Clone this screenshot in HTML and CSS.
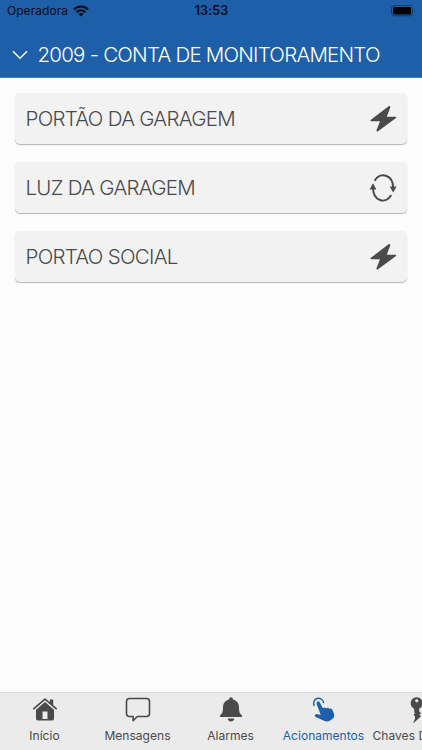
FILE: index.html
```html
<!DOCTYPE html>
<html lang="pt-BR">
  <head>
    <meta charset="UTF-8" />
    <meta name="viewport" content="width=device-width, initial-scale=1.0" />
    <title>Acionamentos</title>
    <link rel="stylesheet" href="styles.css">
  </head>
  <body>
    <header class="header">
      <div class="status">
        <div class="carrier">
          <span class="carrier-name">Operadora</span>
          <svg class="wifi" viewBox="0 0 16 12">
            <g fill="none" stroke="#050c18" stroke-width="2.1">
              <path d="M1 4.4C5 .5 11 .5 15 4.4" />
              <path d="M3.5 7.2C6.1 4.8 9.9 4.8 12.5 7.2" />
            </g>
            <path fill="#050c18" d="M5.4 9Q8 6.9 10.6 9L8 11.6z" />
          </svg>
        </div>
        <div class="clock">13:53</div>
        <svg class="battery" viewBox="0 0 25 12">
          <rect x=".5" y=".6" width="21" height="10.2" rx="2.8" fill="none" stroke="#103868" />
          <rect x="2" y="2" width="18" height="7.4" rx="1.6" fill="#000" />
          <path d="M23 3.9q1.4 1.8 0 3.6z" fill="#103868" />
        </svg>
      </div>
      <div class="account">
        <svg class="chevron" viewBox="0 0 16 10">
          <path d="M1 1.2l7 7 7-7" fill="none" stroke="#fff" stroke-width="1.4" />
        </svg>
        <h1 class="title">2009 - CONTA DE MONITORAMENTO</h1>
      </div>
    </header>

    <main class="list">
      <div class="card">
        <span>PORTÃO DA GARAGEM</span>
        <svg class="card-icon" viewBox="0 0 28 28">
          <path d="M19.6 1.3L1.6 15q-.7.9.5 1.2H11L7.4 25.4q0 1.5 1.3 1L27 13q.7-1.1-.5-1.2H17.8L21.3 2.2Q21.2.6 19.6 1.3z" />
        </svg>
      </div>
      <div class="card">
        <span>LUZ DA GARAGEM</span>
        <svg class="card-icon" viewBox="0 0 28 28">
          <g fill="none" stroke="#4a4a4a" stroke-width="2">
            <path d="M5.6 6.8C11-2.6 24.2.4 24.2 14" />
            <path d="M22.2 21C16.8 30.6 4 27.4 4 13.5" />
          </g>
          <path d="M20.8 12.4h6.8l-3.4 6.2z" />
          <path d="M.6 15.4h6.8L4 9.2z" />
        </svg>
      </div>
      <div class="card">
        <span>PORTAO SOCIAL</span>
        <svg class="card-icon" viewBox="0 0 28 28">
          <path d="M19.6 1.3L1.6 15q-.7.9.5 1.2H11L7.4 25.4q0 1.5 1.3 1L27 13q.7-1.1-.5-1.2H17.8L21.3 2.2Q21.2.6 19.6 1.3z" />
        </svg>
      </div>
    </main>

    <nav class="tabs">
      <div class="tab">
        <svg class="tab-icon" viewBox="0 0 26 26">
          <path d="M1.3 12.2L13 2.2l11.7 10" fill="none" stroke="#4a4a4a" stroke-width="1.7" />
          <path d="M17.8 2.6h3.4v6l-3.4-2.9z" />
          <path d="M4 12.8L13 5l9 7.8v9q0 1.8-1.8 1.8H5.8q-1.8 0-1.8-1.8zM10.5 14.5v7.5h5v-7.5z" fill-rule="evenodd" />
        </svg>
        <span>Início</span>
      </div>
      <div class="tab">
        <svg class="tab-icon" viewBox="0 0 26 26">
          <path d="M4.5 1.5h17q3 0 3 3v12q0 3-3 3h-9.2L8.1 23.8v-4.3H4.5q-3 0-3-3v-12q0-3 3-3z" fill="none" stroke="#4a4a4a" stroke-width="1.6" stroke-linejoin="round" />
        </svg>
        <span>Mensagens</span>
      </div>
      <div class="tab">
        <svg class="tab-icon" viewBox="0 0 26 26">
          <path d="M13 .2q1.9 0 2 2.2c4.2 1 6 4.2 6 7.8 0 4.5.7 6.3 2.7 7.9.8.9.5 1.8-.5 1.8H2.8c-1 0-1.3-.9-.5-1.8 2-1.6 2.7-3.4 2.7-7.9 0-3.6 1.8-6.8 6-7.8Q11.1.2 13 .2z" />
          <path d="M9.6 21.5h6.8q-.7 3-3.4 3t-3.4-3z" />
        </svg>
        <span>Alarmes</span>
      </div>
      <div class="tab active">
        <svg class="tab-icon" viewBox="0 0 26 26">
          <path d="M3.4 9A5 5 0 1 1 12.6 6.2" fill="none" stroke="#1d5fa8" stroke-width="1.4" />
          <path d="M5.6 6.9Q5.1 5 6.6 4.4 8 4 8.8 5.6l3.2 5.9q.9-1.4 2.6-.6l.5.5q1.2-1.2 2.8-.2l.5.7q1.7-.8 2.8.7l1.7 3.8q1.2 3.4-1.6 5.7l-2.2 1.5q-2.8 1.6-6.2.2L4.8 20q-1.6-1.1-.7-2.3.8-.9 2.5-.5l3.2.7z" />
        </svg>
        <span>Acionamentos</span>
      </div>
      <div class="tab">
        <svg class="tab-icon" viewBox="0 0 26 26">
          <path d="M12.7.2a6 6 0 1 1-.1 0zM12.7 2.2a1.6 1.6 0 1 0 .1 0z" fill-rule="evenodd" />
          <path d="M10.2 11h5v3.6l2 1.6-2 1.4 1.8 1.4-1.8 2-6.2 5.6 2-5.2v-2.2l-1.6-1.4 1.6-1.4-.8-1.4z" />
        </svg>
        <span>Chaves Digitais</span>
      </div>
    </nav>
  </body>
</html>
```
FILE: styles.css
```css
* {
  box-sizing: border-box;
}
body {
  font-family: Inter, "Liberation Sans", sans-serif;
  background-color: #fcfcfc;
  color: #4a4a4a;
  margin: 0;
  display: flex;
  flex-direction: column;
  height: 100vh;
  overflow: hidden;
}
svg {
  display: block;
  flex: none;
}
.header {
  background-color: #1d5fa8;
  height: 78px;
  border-bottom: 1px solid #4a7fb9;
}
.status {
  display: grid;
  grid-template-columns: 1fr auto 1fr;
  align-items: center;
  height: 21px;
  padding: 0 6px 0 7px;
  color: #050c18;
}
.carrier {
  display: flex;
  align-items: center;
  gap: 5px;
  font-size: 12px;
}
.carrier-name {
  letter-spacing: 0.05px;
}
.wifi {
  width: 16px;
  height: 12px;
}
.clock {
  font-size: 12.5px;
  font-weight: 600;
  letter-spacing: 0.1px;
}
.battery {
  width: 25px;
  height: 12px;
  justify-self: end;
}
.account {
  display: flex;
  align-items: center;
  gap: 9.5px;
  height: 55px;
  padding: 12px 0 0 12px;
}
.chevron {
  width: 16px;
  height: 10px;
}
.title {
  margin: 0;
  color: #fff;
  font-size: 20.5px;
  font-weight: 300;
  letter-spacing: -0.77px;
  white-space: nowrap;
}
.list {
  flex: 1;
  display: flex;
  flex-direction: column;
  gap: 18px;
  padding: 15px;
}
.card {
  display: flex;
  align-items: center;
  justify-content: space-between;
  height: 51px;
  padding: 0 10px 0 10.5px;
  background-color: #f2f2f2;
  border-radius: 5px;
  box-shadow: 0 1px 1px rgba(0, 0, 0, 0.28);
  font-size: 20.5px;
  font-weight: 300;
  letter-spacing: -0.72px;
}
.card-icon {
  width: 28px;
  height: 28px;
  fill: #4a4a4a;
}
.tabs {
  display: flex;
  height: 58px;
  background-color: #ebebeb;
  border-top: 1px solid #d8d8d8;
  overflow: hidden;
}
.tab {
  flex: 0 0 93px;
  display: flex;
  flex-direction: column;
  align-items: center;
  gap: 4px;
  padding-top: 4px;
  font-size: 12px;
  line-height: 18px;
  letter-spacing: 0.03px;
  white-space: nowrap;
}
.tab:first-child {
  margin-left: -2px;
}
.tab-icon {
  width: 26px;
  height: 26px;
  fill: #4a4a4a;
}
.active {
  color: #1d5fa8;
}
.active .tab-icon {
  fill: #1d5fa8;
}
```
